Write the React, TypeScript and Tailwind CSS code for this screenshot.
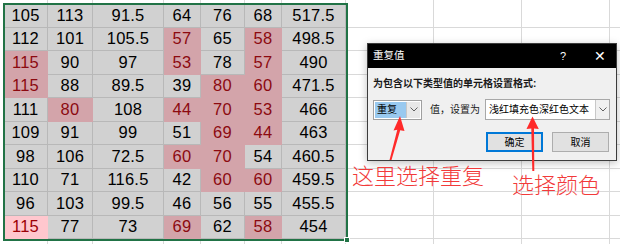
import React from "react";

const DATA: string[][] = [
  ["105", "113", "91.5", "64", "76", "68", "517.5"],
  ["112", "101", "105.5", "57*", "65", "58*", "498.5"],
  ["115*", "90", "97", "53*", "78", "57*", "490"],
  ["115*", "88", "89.5", "39", "80*", "60*", "471.5"],
  ["111", "80*", "108", "44*", "70*", "53*", "466"],
  ["109", "91", "99", "51", "69*", "44*", "463"],
  ["98", "106", "72.5", "60*", "70*", "54", "460.5"],
  ["110", "71", "116.5", "42", "60*", "60*", "459.5"],
  ["96", "103", "99.5", "46", "56", "55", "455.5"],
  ["115!", "77", "73", "69*", "62", "58*", "454"],
];

const COL_W = ["w-[44px]", "w-[45px]", "w-[71px]", "w-[37px]", "w-[44px]", "w-[37px]", "w-[64px]"];

const cellClass = (v: string) => {
  if (v.endsWith("!")) return "bg-[#ffc7ce] text-[#9c0006] border-[#ffc7ce]";
  if (v.endsWith("*")) return "bg-[#d3a4aa] text-[#8c0a10] border-[#d3a4aa]";
  return "bg-[#d1d1d1] text-black border-[#b8b8b8]";
};

// empty sheet cells right of the selection
const BlankTail = ({ bottom = true }: { bottom?: boolean }) => (
  <>
    {["w-[88px]", "w-[88px]", "w-[88px]"].map((w, i) => (
      <div key={i} className={`${w} shrink-0 border-r border-[#d9d9d9] ${bottom ? "border-b" : ""}`} />
    ))}
    <div className={`flex-1 border-[#d9d9d9] ${bottom ? "border-b" : ""}`} />
  </>
);

const Chevron = () => (
  <svg width="8" height="5" viewBox="0 0 8 5" fill="none">
    <path d="M0.5 0.5 L4 4 L7.5 0.5" stroke="#606060" strokeWidth="1" />
  </svg>
);

const Dialog = () => (
  <div className="absolute left-[367px] top-[43px] flex h-[118px] w-[250px] flex-col border border-[#3c3c3c] bg-[#f0f0f0] shadow-[0_2px_8px_rgba(0,0,0,0.25)]">
    <div className="flex h-[24px] items-center justify-between bg-black pl-[5px] pr-[10px] text-[10.5px] text-white">
      <span>重复值</span>
      <div className="flex items-center gap-[28px]">
        <span className="text-[11px]">?</span>
        <span className="text-[14px] font-light leading-none">✕</span>
      </div>
    </div>
    <div className="flex flex-1 flex-col px-[5px] pt-[8px]">
      <div className="whitespace-nowrap text-[10px] font-bold text-[#1a1a1a]">为包含以下类型值的单元格设置格式:</div>
      <div className="mt-[8px] flex items-center">
        <div className="flex h-[20px] w-[49px] shrink-0 items-center border border-[#a0a0a0] bg-white p-[1px]">
          <div className="flex h-full flex-1 items-center bg-[#99c9ef] pl-[2px] text-[10px] text-black">重复</div>
          <div className="flex h-full w-[14px] items-center justify-center border-l border-[#c8c8c8] bg-[#e8e8e8]">
            <Chevron />
          </div>
        </div>
        <span className="ml-[8px] shrink-0 whitespace-nowrap text-[10px] text-[#1a1a1a]">值，设置为</span>
        <div className="ml-[5px] flex h-[21px] w-[125px] shrink-0 items-center border border-[#a8a8a8] bg-white">
          <span className="flex-1 whitespace-nowrap pl-[3px] text-[10px] text-black">浅红填充色深红色文本</span>
          <div className="flex h-full w-[14px] items-center justify-center border-l border-[#c8c8c8] bg-[#f0f0f0]">
            <Chevron />
          </div>
        </div>
      </div>
      <div className="mt-[12px] flex justify-end gap-[9px] pr-[2px]">
        <button className="flex h-[20px] w-[57px] items-center justify-center border-2 border-[#0078d7] bg-[#e1e1e1] text-[10px] text-black">
          确定
        </button>
        <button className="flex h-[20px] w-[57px] items-center justify-center border border-[#adadad] bg-[#e1e1e1] text-[10px] text-black">
          取消
        </button>
      </div>
    </div>
  </div>
);

const Arrows = () => (
  <svg className="pointer-events-none absolute left-0 top-0" width="620" height="244" viewBox="0 0 620 244">
    <path d="M400 116 L393.5 130.5 L397.3 129.8 L389.5 160 L391.5 160 L400.2 130.2 L404.5 131 Z" fill="#ff2a2a" />
    <path d="M532.5 116.5 L526.5 129 L531.3 128.5 L532.3 171 L534.3 171 L534 128.5 L538.8 129 Z" fill="#ff2a2a" />
  </svg>
);

export default function App() {
  return (
    <div
      className="relative h-[244px] w-[620px] overflow-hidden bg-white"
      style={{ fontFamily: '"Liberation Sans", "Noto Sans CJK SC", sans-serif' }}
    >
      {/* sheet */}
      <div className="flex flex-col">
        <div className="flex h-[4px]">
          <div className="w-[4px] shrink-0" />
          {COL_W.map((w, i) => (
            <div key={i} className={`${w} shrink-0 border-r border-[#d9d9d9]`} />
          ))}
          <BlankTail bottom={false} />
        </div>
        {DATA.map((row, r) => (
          <div key={r} className="flex h-[23.5px]">
            <div className="w-[4px] shrink-0" />
            {row.map((v, c) => (
              <div
                key={c}
                className={`${COL_W[c]} ${cellClass(v)} flex shrink-0 items-center justify-center border-b border-r text-[16.5px] tracking-[0.2px]`}
              >
                {v.replace(/[*!]/, "")}
              </div>
            ))}
            <BlankTail />
          </div>
        ))}
        <div className="flex h-[6px]">
          <div className="w-[4px] shrink-0" />
          {COL_W.map((w, i) => (
            <div key={i} className={`${w} shrink-0 border-r border-[#d9d9d9]`} />
          ))}
          <BlankTail bottom={false} />
        </div>
      </div>

      {/* selection outline + fill handle */}
      <div className="pointer-events-none absolute left-[3px] top-[3px] h-[238px] w-[345px] border-2 border-[#217346]" />
      <div className="absolute left-[344px] top-[237px] h-[6px] w-[6px] border border-white bg-[#217346]" />

      <Dialog />
      <Arrows />

      <div
        className="absolute left-[352px] top-[163px] text-[22px] leading-none text-[#f23a3a]"
        style={{ fontFamily: '"Noto Sans CJK SC", sans-serif', fontWeight: 300 }}
      >
        这里选择重复
      </div>
      <div
        className="absolute left-[512px] top-[172px] text-[22px] leading-none text-[#f23a3a]"
        style={{ fontFamily: '"Noto Sans CJK SC", sans-serif', fontWeight: 300 }}
      >
        选择颜色
      </div>
    </div>
  );
}
